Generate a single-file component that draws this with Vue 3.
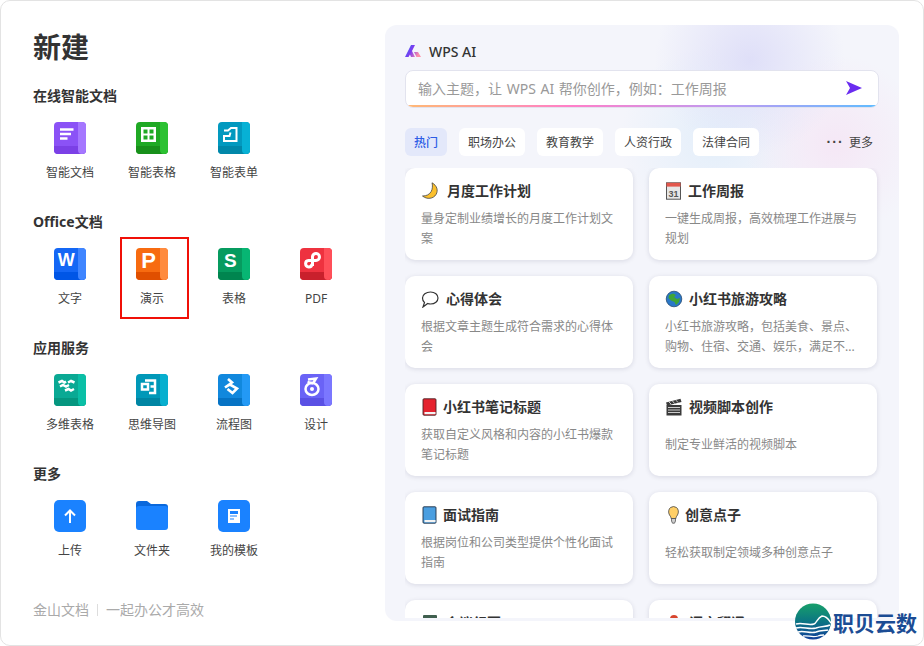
<script setup>
const base = (main, light, dark) => ({ main, light, dark })
const sections = [
  { title: '在线智能文档', items: [
    { label: '智能文档', c: base('#8b52f6', '#a577ff', '#7b40e6'), shapes: [
      { d: 'M6 7.5H19.5M6 12H17M6 16.5H13.5', sw: 2.4 } ] },
    { label: '智能表格', c: base('#1fa924', '#2cc132', '#18901a'), shapes: [
      { d: 'M5 5H20V20H5ZM7.5 7.5V11.5H11.5V7.5ZM13.5 7.5V11.5H17.5V7.5ZM7.5 13.5V17.5H11.5V13.5ZM13.5 13.5V17.5H17.5V13.5Z', fill: true } ] },
    { label: '智能表单', c: base('#0299bf', '#07b1d5', '#0187a9'), shapes: [
      { d: 'M6 8.5H10L13 6H18.5V19H6V14H11.5L12.5 10.5', sw: 2 } ] },
  ] },
  { title: 'Office文档', items: [
    { label: '文字', c: base('#1467f5', '#3f85ff', '#0056e6'), letter: { t: 'W', x: 12.3, y: 18, s: 18 } },
    { label: '演示', boxed: true, c: base('#f76b10', '#ff8b3e', '#e04f00'), letter: { t: 'P', x: 12.5, y: 20, s: 22 } },
    { label: '表格', c: base('#069b5f', '#07b673', '#00854f'), letter: { t: 'S', x: 12.4, y: 19, s: 19 } },
    { label: 'PDF', c: base('#ee323f', '#ff4f59', '#c9202c'), shapes: [
      { d: 'M12.5 18V8.5A3.500 3.500 0 1 1 16 12.500H8.500A3.200 3.200 0 1 0 12 16', sw: 3 } ] },
  ] },
  { title: '应用服务', items: [
    { label: '多维表格', c: base('#0aa994', '#0abfa6', '#05967f'), shapes: [
      { d: 'M4.500 8.500L8 7L10.500 8.500L12 7.500M14 8.500L17 7L20.500 8.500M6 12.500L9 11L12 12.500L15 11M11 16.500L14.500 15L17 16.500L20 15', sw: 2.5 } ] },
    { label: '思维导图', c: base('#0098b8', '#07afcf', '#0085a3'), shapes: [
      { d: 'M6 10H12V15.500H6ZM9 6.500H19V19H13M14.500 12.500H19', sw: 2.500 } ] },
    { label: '流程图', c: base('#1188dd', '#2399f5', '#0673c4'), shapes: [
      { d: 'M10 5L14 8.500L7 13.500L12 10.500L19 14.500L14.500 19L9.500 15', sw: 2.600 } ] },
    { label: '设计', c: base('#6a63f6', '#7b77ff', '#5a50e4'), shapes: [
      { d: 'M8 5.500L16 4.500L13 9.500M7.500 8L13 9.500M12 9A6.500 6 0 1 0 12 21A6.500 6 0 1 0 12 9Z', sw: 2.500 },
      { d: 'M12 17A2 2 0 1 0 12 13A2 2 0 1 0 12 17Z', fill: true } ] },
  ] },
  { title: '更多', items: [
    { label: '上传', flat: 'up' },
    { label: '文件夹', flat: 'folder' },
    { label: '我的模板', flat: 'doc' },
  ] },
]
const tabs = ['热门', '职场办公', '教育教学', '人资行政', '法律合同']
const cards = [
  { e: 'moon', w: 26, t: '月度工作计划', d: '量身定制业绩增长的月度工作计划文案' },
  { e: 'cal', w: 23, t: '工作周报', d: '一键生成周报，高效梳理工作进展与规划' },
  { e: 'chat', w: 25, t: '心得体会', d: '根据文章主题生成符合需求的心得体会' },
  { e: 'globe', w: 24, t: '小红书旅游攻略', d: '小红书旅游攻略，包括美食、景点、购物、住宿、交通、娱乐，满足不...' },
  { e: 'red', w: 22, t: '小红书笔记标题', d: '获取自定义风格和内容的小红书爆款笔记标题' },
  { e: 'clap', w: 24, t: '视频脚本创作', d: '制定专业鲜活的视频脚本' },
  { e: 'blue', w: 22, t: '面试指南', d: '根据岗位和公司类型提供个性化面试指南' },
  { e: 'bulb', w: 20, t: '创意点子', d: '轻松获取制定领域多种创意点子' },
  { e: 'note', w: 24, t: '会议纪要', d: '' },
  { e: 'pin', w: 24, t: '语言翻译', d: '' },
]
</script>

<template>
  <div class="window">
    <aside class="left">
      <h1 class="title">新建</h1>
      <section v-for="s in sections" :key="s.title" class="section">
        <h2 class="heading">{{ s.title }}</h2>
        <div class="grid">
          <div v-for="it in s.items" :key="it.label" class="cell">
            <span v-if="it.boxed" class="redbox"></span>
            <svg class="app" viewBox="0 0 32 32" width="32" height="32">
              <template v-if="it.c">
                <rect width="32" height="32" rx="4" :fill="it.c.main" />
                <path d="M0 24H32V28A4 4 0 0 1 28 32H4A4 4 0 0 1 0 28Z" :fill="it.c.dark" />
                <path d="M24 0H28A4 4 0 0 1 32 4V28A4 4 0 0 1 28 32A4 4 0 0 1 24 28Z" :fill="it.c.light" />
                <text v-if="it.letter" class="letter" :x="it.letter.x" :y="it.letter.y" :font-size="it.letter.s" text-anchor="middle">{{ it.letter.t }}</text>
                <path v-for="(p, i) in it.shapes" :key="i" :d="p.d" :fill="p.fill ? '#fff' : 'none'" fill-rule="evenodd" :stroke="p.fill ? 'none' : '#fff'" :stroke-width="p.sw" />
              </template>
              <template v-else-if="it.flat === 'up'">
                <rect width="32" height="32" rx="5" fill="#1a82ff" />
                <path d="M16 23V11M11 15.500L16 10.500L21 15.500" fill="none" stroke="#fff" stroke-width="2" />
              </template>
              <template v-else-if="it.flat === 'folder'">
                <path d="M0 4A3 3 0 0 1 3 1H11L15 4H29A3 3 0 0 1 32 7V12H0Z" fill="#0a68dc" />
                <path d="M0 9A3 3 0 0 1 3 6H29A3 3 0 0 1 32 9V27A3 3 0 0 1 29 30H3A3 3 0 0 1 0 27Z" fill="#1a82ff" />
              </template>
              <template v-else>
                <rect width="32" height="32" rx="5" fill="#1a82ff" />
                <rect x="10" y="9" width="12" height="14" fill="#fff" />
                <path d="M12 11H20V14H12ZM12 15.500H19V16.500H12ZM12 18.500H16V19.500H12Z" fill="#1a82ff" />
              </template>
            </svg>
            <span class="label">{{ it.label }}</span>
          </div>
        </div>
      </section>
      <footer class="foot"><span>金山文档</span><i class="bar"></i><span>一起办公才高效</span></footer>
    </aside>

    <main class="panel">
      <div class="brand">
        <svg viewBox="0 0 16 12" width="16" height="12">
          <defs>
            <linearGradient id="wa" x1="0" y1="0" x2="1" y2="0.4">
              <stop offset="0" stop-color="#2f6ff8" />
              <stop offset="0.5" stop-color="#7b3cf0" />
              <stop offset="1" stop-color="#ff8fa8" />
            </linearGradient>
          </defs>
          <path d="M0 12L6 0H10L7 6L10 12H6L5 9.500L3.500 12Z M9 7H13L16 12H11.500Z" fill="url(#wa)" />
        </svg>
        <span>WPS AI</span>
      </div>
      <div class="ask">
        <span class="hint">输入主题，让 WPS AI 帮你创作，例如：工作周报</span>
        <svg viewBox="0 0 16 14" width="16" height="14"><path d="M0 0L16 7L0 14L4 7Z" fill="#6a2cf0" /></svg>
      </div>
      <div class="tabs">
        <span v-for="(t, i) in tabs" :key="t" class="tab" :class="{ on: i === 0 }">{{ t }}</span>
        <span class="more"><b class="dots">···</b>更多</span>
      </div>
      <div class="list">
        <article v-for="c in cards" :key="c.t" class="card">
          <div class="card-head">
            <span class="emoji" :style="{ width: c.w + 'px' }">
              <svg viewBox="0 0 18 18" width="18" height="18">
                <template v-if="c.e === 'moon'">
                  <path d="M11 .8C16 3.500 17.500 8.500 15 12.500C12.500 16.800 6 17.800 1.500 14C5.500 14 8.500 12.500 10.200 9.500C11.500 7 11.800 3.800 11 .8Z" fill="#fbc02d" stroke="#444" stroke-width=".8" />
                </template>
                <template v-else-if="c.e === 'cal'">
                  <rect x="1.500" y=".8" width="14" height="16.400" fill="#e6e6e6" stroke="#555" />
                  <rect x="1.500" y=".8" width="14" height="3.800" fill="#e2574c" />
                  <text x="8.500" y="14.500" font-size="9" text-anchor="middle" fill="#555" class="cal">31</text>
                </template>
                <template v-else-if="c.e === 'chat'">
                  <path d="M9.500 2C14 2 17 4.800 17 8C17 11.200 14 14 9.500 14C8.500 14 7.500 13.800 6.700 13.500L2 17L3.500 12.500C2.200 11.500 1.500 9.800 1.500 8C1.500 4.800 5 2 9.500 2Z" fill="#fff" stroke="#333" stroke-width="1.200" />
                </template>
                <template v-else-if="c.e === 'globe'">
                  <circle cx="9" cy="9" r="7.800" fill="#2a78c8" stroke="#1c3f63" stroke-width=".7" />
                  <path d="M4 5L8 3.500L11 5L9 7L12 9L15 8L14 12L11 15L9.500 12L6 10.500L3.500 8Z" fill="#3fa535" />
                </template>
                <template v-else-if="c.e === 'red'">
                  <rect x="2" y=".8" width="13" height="16.400" rx="1" fill="#e5232f" stroke="#4a2226" stroke-width=".9" />
                  <rect x="3.500" y="14" width="11" height="2.200" fill="#f3f3f3" />
                </template>
                <template v-else-if="c.e === 'blue'">
                  <rect x="2" y=".8" width="13" height="16.400" rx="1" fill="#4a9ee0" stroke="#1f2f44" stroke-width=".9" />
                  <rect x="3.500" y="14" width="11" height="2.200" fill="#f3f3f3" />
                </template>
                <template v-else-if="c.e === 'clap'">
                  <rect x="1.500" y="7" width="15" height="10.500" fill="#3a3a3a" />
                  <path d="M1 4.500L15.500 .8L16.500 4L2 7.500Z" fill="#3a3a3a" />
                  <path d="M4 4L6 6M7.500 3L9.500 5.500M11 2.200L13 4.500M3 9.500H15M3 12H15M3 14.500H15" stroke="#ddd" stroke-width=".9" fill="none" />
                </template>
                <template v-else-if="c.e === 'bulb'">
                  <path d="M5.500 1.500A5.500 5.500 0 0 1 11.500 1.500C13.500 3 14 6.500 12.500 9C11.500 10.500 11 11 11 12.500H6C6 11 5.500 10.500 4.500 9C3 6.500 3.500 3 5.500 1.500Z" fill="#ffcf66" stroke="#444" stroke-width=".8" />
                  <path d="M6.500 12.500H10.500V15L9.500 17.200H7.500L6.500 15Z" fill="#cfcfcf" stroke="#444" stroke-width=".7" />
                </template>
                <template v-else-if="c.e === 'note'">
                  <rect x="2" y="1" width="14" height="16" rx="1" fill="#3f5f4f" />
                </template>
                <template v-else>
                  <circle cx="9" cy="5" r="4" fill="#d8452e" />
                  <path d="M6 8L9 17L12 8Z" fill="#888" />
                </template>
              </svg>
            </span>
            <span class="card-title">{{ c.t }}</span>
          </div>
          <p class="desc">{{ c.d }}</p>
        </article>
      </div>
    </main>

    <div class="mark">
      <svg viewBox="0 0 36 37" width="36" height="37">
        <defs>
          <linearGradient id="gl" x1="0" y1="0" x2="0" y2="1">
            <stop offset="0" stop-color="#18a06a" />
            <stop offset="0.45" stop-color="#0c7a80" />
            <stop offset="1" stop-color="#12409a" />
          </linearGradient>
        </defs>
        <circle cx="18" cy="18.500" r="18" fill="url(#gl)" />
        <path d="M1 21C8 19 13 23 19 21C22 20 22 15 27 13C32 13 34 17 36 20" fill="none" stroke="#fff" stroke-width="1.400" />
        <path d="M1 25C8 23 14 27 21 25C27 23 31 24 35 22" fill="none" stroke="#fff" stroke-width="1.500" />
        <path d="M3 29C9 27 15 31 21 29C26 27 30 28 33 27" fill="none" stroke="#fff" stroke-width="1.500" />
        <path d="M8 33C13 32 17 35 23 33C25 32 27 32 29 32" fill="none" stroke="#fff" stroke-width="1.300" />
      </svg>
      <span>职贝云数</span>
    </div>
  </div>
</template>

<style scoped>
.window {
  position: relative;
  box-sizing: border-box;
  width: 924px;
  height: 646px;
  display: flex;
  background: #fff;
  border: 1px solid #e3e3e3;
  border-radius: 10px;
  overflow: hidden;
  font-family: "Noto Sans", "Noto Sans CJK SC", sans-serif;
  color: #333;
}
.left {
  width: 384px;
  flex: none;
  box-sizing: border-box;
  padding: 25px 0 0 32px;
  display: flex;
  flex-direction: column;
}
.title {
  margin: 0;
  height: 40px;
  line-height: 42px;
  font-size: 28px;
  font-weight: 700;
  color: #333;
}
.section { height: 126px; }
.section:first-of-type { margin-top: 20px; }
.heading {
  margin: 0;
  height: 20px;
  line-height: 20px;
  font-size: 14px;
  font-weight: 700;
  color: #333;
}
.grid {
  display: flex;
  margin: 16px 0 0 -4px;
}
.cell {
  position: relative;
  width: 82px;
  display: flex;
  flex-direction: column;
  align-items: center;
}
.redbox {
  position: absolute;
  left: 9px;
  top: -11px;
  width: 69px;
  height: 82px;
  box-sizing: border-box;
  border: 2px solid #f01008;
}
.app { display: block; }
.letter {
  font-family: "Liberation Sans", sans-serif;
  font-weight: 700;
  fill: #fff;
}
.cal { font-family: "Liberation Sans", sans-serif; font-weight: 700; }
.label {
  margin-top: 9px;
  line-height: 20px;
  font-size: 12px;
  color: #444;
}
.foot {
  margin-top: 10px;
  display: flex;
  align-items: center;
  font-size: 14px;
  line-height: 20px;
  color: #aaa;
}
.bar {
  width: 1px;
  height: 12px;
  margin: 0 8px;
  background: #ddd;
}
.panel {
  position: relative;
  box-sizing: border-box;
  width: 514px;
  height: 596px;
  margin-top: 24px;
  padding: 16px 20px 3px;
  display: flex;
  flex-direction: column;
  border-radius: 12px;
  overflow: hidden;
  background:
    radial-gradient(circle at 365px 35px, rgba(222, 222, 248, .95), rgba(222, 222, 248, 0) 95px),
    radial-gradient(circle at 450px 120px, rgba(245, 230, 245, .9), rgba(245, 230, 245, 0) 90px),
    radial-gradient(circle at 330px 115px, rgba(226, 238, 250, .9), rgba(226, 238, 250, 0) 95px),
    #f4f5fb;
}
.brand {
  height: 20px;
  display: flex;
  align-items: center;
  gap: 8px;
  font-size: 14px;
  font-weight: 500;
  color: #333;
}
.ask {
  position: relative;
  box-sizing: border-box;
  width: 474px;
  height: 38px;
  margin-top: 9px;
  padding: 0 16px 2px 12px;
  display: flex;
  align-items: center;
  justify-content: space-between;
  background: #fff;
  border: 1px solid #e2e3ee;
  border-radius: 8px;
  overflow: hidden;
}
.ask::after {
  content: "";
  position: absolute;
  left: 0;
  right: 0;
  bottom: 0;
  height: 2px;
  background: linear-gradient(90deg, #ffb974, #ff7fc9 35%, #b99cf3 70%, #60bcff);
}
.hint { font-size: 14px; color: #999; word-spacing: 1px; }
.tabs {
  width: 468px;
  height: 28px;
  margin-top: 20px;
  display: flex;
  align-items: center;
  gap: 12px;
  flex: none;
}
.tab {
  height: 28px;
  line-height: 30px;
  padding: 0 9px;
  border-radius: 6px;
  background: #fff;
  font-size: 12px;
  color: #444;
}
.tab.on {
  background: #e3e8fa;
  color: #2c5ce6;
  font-weight: 500;
}
.more {
  margin-left: auto;
  display: flex;
  align-items: center;
  gap: 5px;
  font-size: 12px;
  color: #444;
}
.dots {
  font-family: "Liberation Sans", sans-serif;
  font-size: 14px;
  line-height: 12px;
  letter-spacing: 1.200px;
  font-weight: 700;
}
.list {
  flex: 1;
  min-height: 0;
  margin-top: 12px;
  width: 478px;
  display: grid;
  grid-template-columns: 228px 228px;
  grid-auto-rows: 92px;
  gap: 16px;
  overflow: hidden;
}
.card {
  box-sizing: border-box;
  padding: 12px 16px;
  background: #fff;
  border-radius: 10px;
  box-shadow: 0 1px 5px rgba(20, 20, 60, .12);
}
.card-head {
  height: 22px;
  display: flex;
  align-items: center;
}
.emoji {
  flex: none;
  height: 18px;
  display: block;
}
.emoji svg { display: block; }
.card-title {
  padding-bottom: 2px;
  font-size: 14px;
  font-weight: 700;
  color: #333;
}
.desc {
  margin: 7px 0 0;
  height: 40px;
  display: flex;
  align-items: center;
  font-size: 12px;
  line-height: 20px;
  color: #888;
}
.mark {
  position: absolute;
  left: 794px;
  top: 602px;
  display: flex;
  align-items: center;
  gap: 2px;
  font-size: 21px;
  font-weight: 700;
  color: #1b4c94;
  white-space: nowrap;
}
.mark svg { display: block; }
</style>
